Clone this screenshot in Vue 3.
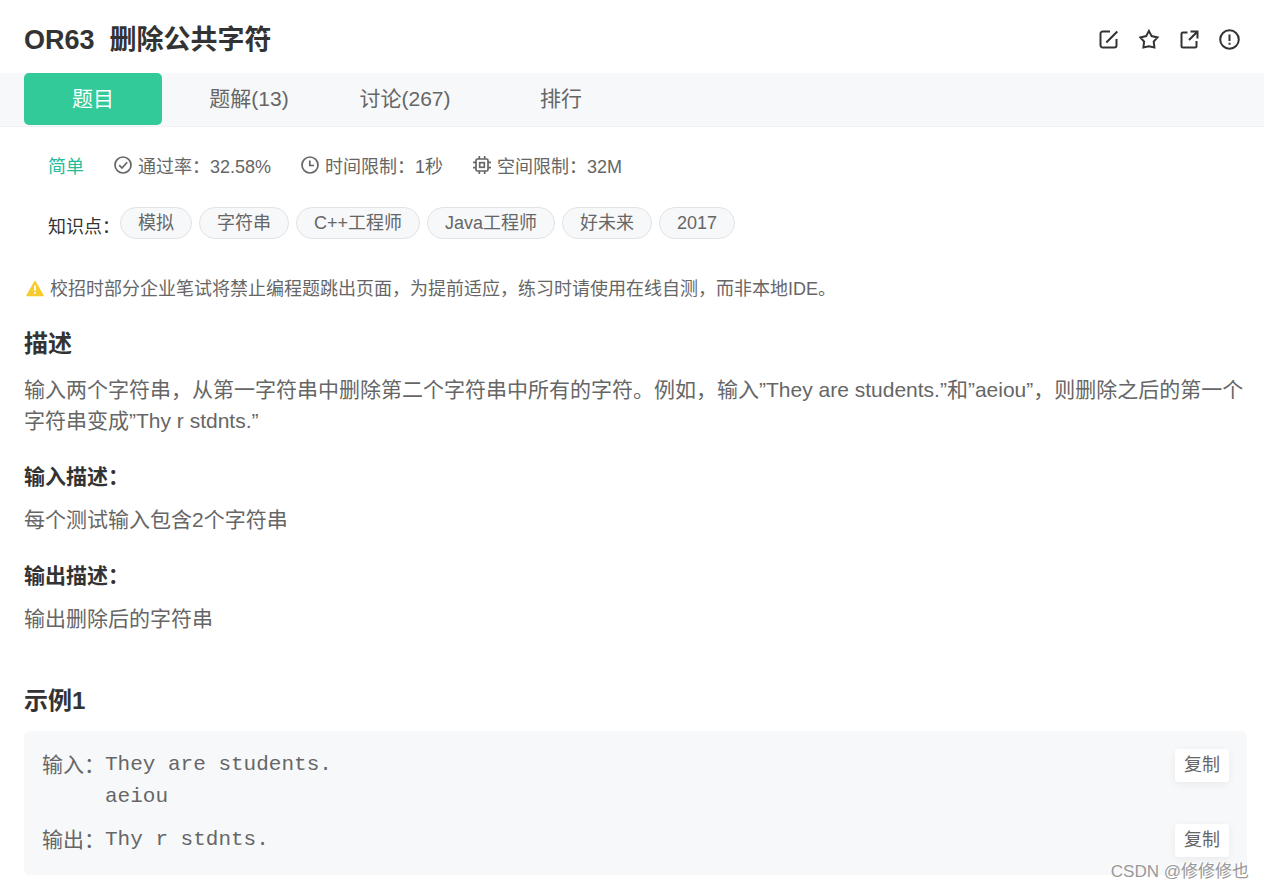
<script setup>
import { ref } from 'vue'

const tabs = ['题目', '题解(13)', '讨论(267)', '排行']
const active = ref(0)
const tags = ['模拟', '字符串', 'C++工程师', 'Java工程师', '好未来', '2017']
const samples = [
  { label: '输入：', text: 'They are students.\naeiou' },
  { label: '输出：', text: 'Thy r stdnts.' },
]
const copy = (text) => navigator.clipboard?.writeText(text)
</script>

<template>
  <main class="page">
    <header class="header">
      <h1 class="title"><span>OR63</span><span>删除公共字符</span></h1>
      <div class="actions">
        <button class="action" type="button" aria-label="笔记">
          <svg viewBox="0 0 21 21"><path d="M11 2.500H3.700A2.200 2.200 0 0 0 1.500 4.700V16.300A2.200 2.200 0 0 0 3.700 18.500H15.300A2.200 2.200 0 0 0 17.500 16.300V10M7.300 13.500 18.300 2.500" /></svg>
        </button>
        <button class="action" type="button" aria-label="收藏">
          <svg viewBox="0 0 21 21"><path d="M9.900 1.900 12.600 7.100 18.500 8.400 14.700 12.700 15.400 18.500 9.900 17.200 4.400 18.500 5.100 12.700 1.300 8.400 7.200 7.100Z" /></svg>
        </button>
        <button class="action" type="button" aria-label="分享">
          <svg viewBox="0 0 21 21"><path d="M8.500 3.500H4A1.500 1.500 0 0 0 2.500 5V17A1.500 1.500 0 0 0 4 18.500H16A1.500 1.500 0 0 0 17.500 17V12M11.500 2.500H18.500V9.500M18.300 2.700 10 11" /></svg>
        </button>
        <button class="action" type="button" aria-label="反馈">
          <svg viewBox="0 0 21 21"><circle cx="10.500" cy="10.500" r="9.300" /><path d="M10.500 5.500V12M10.500 13.800V15.800" /></svg>
        </button>
      </div>
    </header>

    <nav class="tabs">
      <button
        v-for="(tab, i) in tabs"
        :key="tab"
        type="button"
        class="tab"
        :class="{ active: i === active }"
        @click="active = i"
      >{{ tab }}</button>
    </nav>

    <section class="info">
      <div class="meta">
        <span class="level">简单</span>
        <span class="stat">
          <svg viewBox="0 0 18 18"><circle cx="9" cy="9" r="8" /><path d="M5.200 9.200 8 12 13.200 6.300" /></svg>
          通过率：32.58%
        </span>
        <span class="stat">
          <svg viewBox="0 0 18 18"><circle cx="9" cy="9" r="8" /><path d="M8.800 4.500V9.500H13" /></svg>
          时间限制：1秒
        </span>
        <span class="stat">
          <svg viewBox="0 0 18 18"><rect x="3" y="3" width="12" height="12" rx="1.500" /><rect x="6.700" y="6.700" width="4.600" height="4.600" /><path d="M6.300 0V3M11.700 0V3M6.300 15V18M11.700 15V18M0 6.300H3M0 11.700H3M15 6.300H18M15 11.700H18" /></svg>
          空间限制：32M
        </span>
      </div>
      <div class="topics">
        <span class="topics-label">知识点：</span>
        <ul class="tags">
          <li v-for="tag in tags" :key="tag" class="tag">{{ tag }}</li>
        </ul>
      </div>
    </section>

    <article class="content">
      <p class="notice">
        <svg viewBox="0 0 18 18"><path d="M9 1.500 17 15.500H1Z" fill="#f7cb2d" stroke="#f7cb2d" stroke-width="1.500" stroke-linejoin="round" /><path d="M9 5.500V10.700M9 12V13.800" stroke="#fff" stroke-width="1.800" /></svg>
        校招时部分企业笔试将禁止编程题跳出页面，为提前适应，练习时请使用在线自测，而非本地IDE。
      </p>

      <h2 class="heading">描述</h2>
      <p class="text">输入两个字符串，从第一字符串中删除第二个字符串中所有的字符。例如，输入”They are students.”和”aeiou”，则删除之后的第一个字符串变成”Thy r stdnts.”</p>

      <h3 class="subheading">输入描述：</h3>
      <p class="text">每个测试输入包含2个字符串</p>

      <h3 class="subheading">输出描述：</h3>
      <p class="text">输出删除后的字符串</p>

      <h2 class="heading example">示例1</h2>
      <div class="samples">
        <div v-for="sample in samples" :key="sample.label" class="sample">
          <span class="sample-label">{{ sample.label }}</span>
          <pre class="code">{{ sample.text }}</pre>
          <button type="button" class="copy" @click="copy(sample.text)">复制</button>
        </div>
      </div>
    </article>
    <span class="watermark">CSDN @修修修也</span>
  </main>
</template>

<style>
body {
  margin: 0;
  background: #fff;
}
</style>

<style scoped>
.page {
  position: relative;
  padding-bottom: 15px;
  color: #666;
  font-family: "Liberation Sans", "Noto Sans CJK SC", sans-serif;
  font-size: 21px;
}
h1, h2, h3, p, ul, pre {
  margin: 0;
  padding: 0;
}
button {
  border: 0;
  padding: 0;
  background: none;
  color: inherit;
  font: inherit;
  cursor: pointer;
}
.header {
  display: flex;
  justify-content: space-between;
  align-items: center;
  padding: 20px 24px 13px;
}
.title {
  display: flex;
  gap: 15px;
  color: #333;
  font-size: 27px;
  line-height: 40px;
}
.actions {
  display: flex;
  gap: 19px;
  padding-bottom: 2px;
}
.action {
  width: 21px;
  height: 21px;
}
.action svg {
  display: block;
  fill: none;
  stroke: #333;
  stroke-width: 2;
}
.tabs {
  display: flex;
  gap: 18px;
  padding: 0 24px 1px;
  background: #f7f8fa;
  border-bottom: 1px solid #f0f1f3;
}
.tab {
  width: 138px;
  border-radius: 5px;
  line-height: 52px;
}
.tab.active {
  background: #32ca99;
  color: #fff;
}
.info {
  padding: 26px 48px 0;
  font-size: 18px;
}
.meta {
  display: flex;
  gap: 30px;
  line-height: 28px;
}
.level {
  color: #25bb9b;
}
.stat {
  display: flex;
  gap: 6px;
}
.stat svg {
  width: 18px;
  height: 18px;
  margin-top: 3px;
  fill: none;
  stroke: #666;
  stroke-width: 1.700;
}
.topics {
  display: flex;
  align-items: flex-end;
  margin-top: 26px;
}
.topics-label {
  color: #333;
  line-height: 24px;
}
.tags {
  display: flex;
  flex-wrap: wrap;
  gap: 7px;
  list-style: none;
}
.tag {
  padding: 0 17px;
  border: 1px solid #e2e3e5;
  border-radius: 16px;
  background: #f7f8fa;
  line-height: 30px;
}
.content {
  padding: 36px 17px 0 24px;
}
.notice {
  display: flex;
  align-items: center;
  gap: 6px;
  padding-left: 2px;
  font-size: 18px;
  line-height: 28px;
}
.notice svg {
  flex: none;
  width: 18px;
  height: 18px;
}
.heading {
  margin: 24px 0 13px;
  color: #333;
  font-size: 24px;
  line-height: 34px;
}
.text {
  line-height: 31px;
}
.subheading {
  margin: 25px 0 12px;
  color: #333;
  font-size: 21px;
  line-height: 31px;
}
.example {
  margin-top: 50px;
}
.samples {
  display: flex;
  flex-direction: column;
  gap: 11px;
  padding: 18px;
  border-radius: 6px;
  background: #f7f8fa;
}
.sample {
  display: flex;
  align-items: flex-start;
}
.sample-label {
  line-height: 32px;
}
.code {
  flex: 1;
  font-family: "Liberation Mono", monospace;
  font-size: 21px;
  line-height: 32px;
}
.copy {
  width: 54px;
  border-radius: 3px;
  background: #fff;
  box-shadow: 0 2px 8px rgba(0, 0, 0, 0.06);
  font-size: 18px;
  line-height: 33px;
}
.watermark {
  position: absolute;
  right: 15px;
  bottom: 6px;
  color: #999;
  font-size: 17px;
  line-height: 24px;
  text-shadow: -1px -1px 0 #fff;
}
</style>
